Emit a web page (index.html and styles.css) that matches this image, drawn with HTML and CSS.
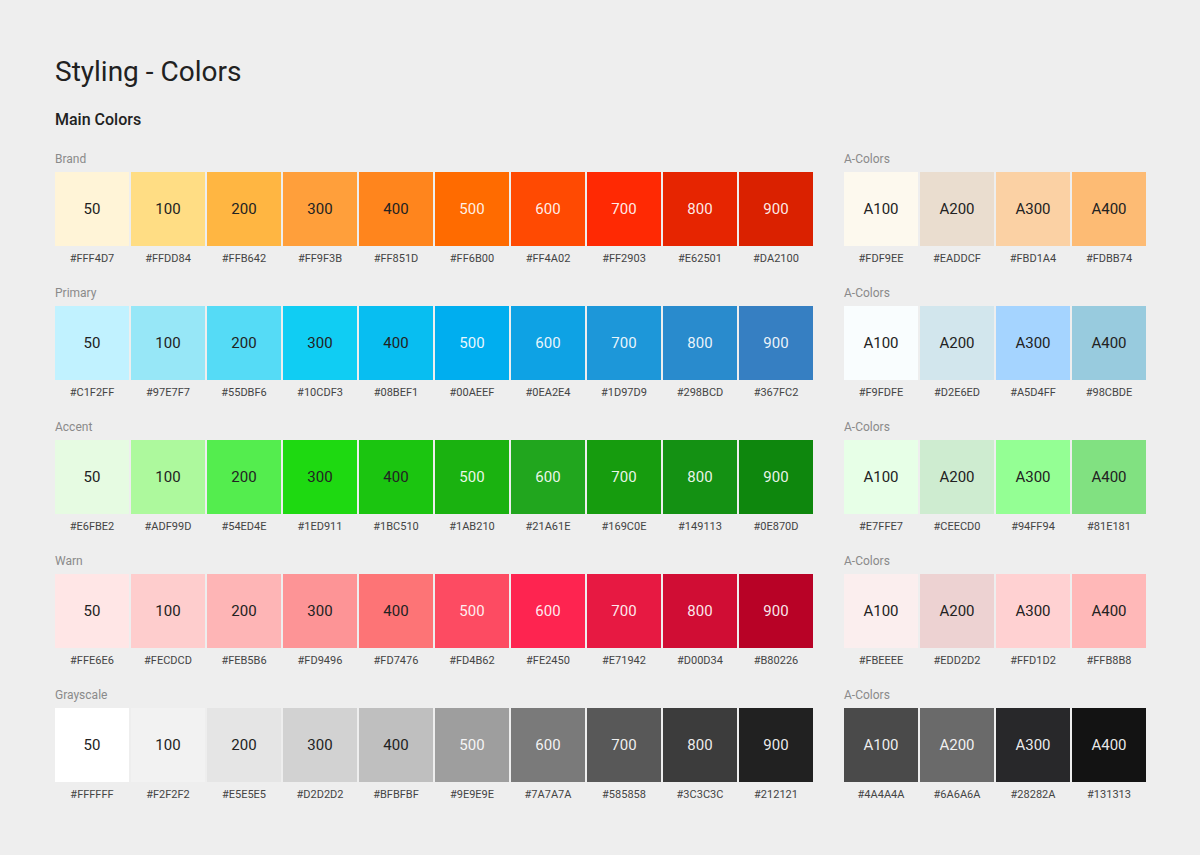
FILE: index.html
```html
<!DOCTYPE html>
<html lang="en">
<head>
<meta charset="utf-8">
<title>Styling - Colors</title>
<link rel="stylesheet" href="styles.css">
</head>
<body>
<main class="page">
  <h1 class="title">Styling - Colors</h1>
  <h2 class="subtitle">Main Colors</h2>

  <section class="row">
    <div class="group">
      <div class="label">Brand</div>
      <div class="swatches s10">
        <div class="sw"><div class="box dk" style="background:#FFF4D7">50</div><div class="hex">#FFF4D7</div></div>
        <div class="sw"><div class="box dk" style="background:#FFDD84">100</div><div class="hex">#FFDD84</div></div>
        <div class="sw"><div class="box dk" style="background:#FFB642">200</div><div class="hex">#FFB642</div></div>
        <div class="sw"><div class="box dk" style="background:#FF9F3B">300</div><div class="hex">#FF9F3B</div></div>
        <div class="sw"><div class="box dk" style="background:#FF851D">400</div><div class="hex">#FF851D</div></div>
        <div class="sw"><div class="box lt" style="background:#FF6B00">500</div><div class="hex">#FF6B00</div></div>
        <div class="sw"><div class="box lt" style="background:#FF4A02">600</div><div class="hex">#FF4A02</div></div>
        <div class="sw"><div class="box lt" style="background:#FF2903">700</div><div class="hex">#FF2903</div></div>
        <div class="sw"><div class="box lt" style="background:#E62501">800</div><div class="hex">#E62501</div></div>
        <div class="sw"><div class="box lt" style="background:#DA2100">900</div><div class="hex">#DA2100</div></div>
      </div>
    </div>
    <div class="group">
      <div class="label">A-Colors</div>
      <div class="swatches s4">
        <div class="sw"><div class="box dk" style="background:#FDF9EE">A100</div><div class="hex">#FDF9EE</div></div>
        <div class="sw"><div class="box dk" style="background:#EADDCF">A200</div><div class="hex">#EADDCF</div></div>
        <div class="sw"><div class="box dk" style="background:#FBD1A4">A300</div><div class="hex">#FBD1A4</div></div>
        <div class="sw"><div class="box dk" style="background:#FDBB74">A400</div><div class="hex">#FDBB74</div></div>
      </div>
    </div>
  </section>

  <section class="row">
    <div class="group">
      <div class="label">Primary</div>
      <div class="swatches s10">
        <div class="sw"><div class="box dk" style="background:#C1F2FF">50</div><div class="hex">#C1F2FF</div></div>
        <div class="sw"><div class="box dk" style="background:#97E7F7">100</div><div class="hex">#97E7F7</div></div>
        <div class="sw"><div class="box dk" style="background:#55DBF6">200</div><div class="hex">#55DBF6</div></div>
        <div class="sw"><div class="box dk" style="background:#10CDF3">300</div><div class="hex">#10CDF3</div></div>
        <div class="sw"><div class="box dk" style="background:#08BEF1">400</div><div class="hex">#08BEF1</div></div>
        <div class="sw"><div class="box lt" style="background:#00AEEF">500</div><div class="hex">#00AEEF</div></div>
        <div class="sw"><div class="box lt" style="background:#0EA2E4">600</div><div class="hex">#0EA2E4</div></div>
        <div class="sw"><div class="box lt" style="background:#1D97D9">700</div><div class="hex">#1D97D9</div></div>
        <div class="sw"><div class="box lt" style="background:#298BCD">800</div><div class="hex">#298BCD</div></div>
        <div class="sw"><div class="box lt" style="background:#367FC2">900</div><div class="hex">#367FC2</div></div>
      </div>
    </div>
    <div class="group">
      <div class="label">A-Colors</div>
      <div class="swatches s4">
        <div class="sw"><div class="box dk" style="background:#F9FDFE">A100</div><div class="hex">#F9FDFE</div></div>
        <div class="sw"><div class="box dk" style="background:#D2E6ED">A200</div><div class="hex">#D2E6ED</div></div>
        <div class="sw"><div class="box dk" style="background:#A5D4FF">A300</div><div class="hex">#A5D4FF</div></div>
        <div class="sw"><div class="box dk" style="background:#98CBDE">A400</div><div class="hex">#98CBDE</div></div>
      </div>
    </div>
  </section>

  <section class="row">
    <div class="group">
      <div class="label">Accent</div>
      <div class="swatches s10">
        <div class="sw"><div class="box dk" style="background:#E6FBE2">50</div><div class="hex">#E6FBE2</div></div>
        <div class="sw"><div class="box dk" style="background:#ADF99D">100</div><div class="hex">#ADF99D</div></div>
        <div class="sw"><div class="box dk" style="background:#54ED4E">200</div><div class="hex">#54ED4E</div></div>
        <div class="sw"><div class="box dk" style="background:#1ED911">300</div><div class="hex">#1ED911</div></div>
        <div class="sw"><div class="box dk" style="background:#1BC510">400</div><div class="hex">#1BC510</div></div>
        <div class="sw"><div class="box lt" style="background:#1AB210">500</div><div class="hex">#1AB210</div></div>
        <div class="sw"><div class="box lt" style="background:#21A61E">600</div><div class="hex">#21A61E</div></div>
        <div class="sw"><div class="box lt" style="background:#169C0E">700</div><div class="hex">#169C0E</div></div>
        <div class="sw"><div class="box lt" style="background:#149113">800</div><div class="hex">#149113</div></div>
        <div class="sw"><div class="box lt" style="background:#0E870D">900</div><div class="hex">#0E870D</div></div>
      </div>
    </div>
    <div class="group">
      <div class="label">A-Colors</div>
      <div class="swatches s4">
        <div class="sw"><div class="box dk" style="background:#E7FFE7">A100</div><div class="hex">#E7FFE7</div></div>
        <div class="sw"><div class="box dk" style="background:#CEECD0">A200</div><div class="hex">#CEECD0</div></div>
        <div class="sw"><div class="box dk" style="background:#94FF94">A300</div><div class="hex">#94FF94</div></div>
        <div class="sw"><div class="box dk" style="background:#81E181">A400</div><div class="hex">#81E181</div></div>
      </div>
    </div>
  </section>

  <section class="row">
    <div class="group">
      <div class="label">Warn</div>
      <div class="swatches s10">
        <div class="sw"><div class="box dk" style="background:#FFE6E6">50</div><div class="hex">#FFE6E6</div></div>
        <div class="sw"><div class="box dk" style="background:#FECDCD">100</div><div class="hex">#FECDCD</div></div>
        <div class="sw"><div class="box dk" style="background:#FEB5B6">200</div><div class="hex">#FEB5B6</div></div>
        <div class="sw"><div class="box dk" style="background:#FD9496">300</div><div class="hex">#FD9496</div></div>
        <div class="sw"><div class="box dk" style="background:#FD7476">400</div><div class="hex">#FD7476</div></div>
        <div class="sw"><div class="box lt" style="background:#FD4B62">500</div><div class="hex">#FD4B62</div></div>
        <div class="sw"><div class="box lt" style="background:#FE2450">600</div><div class="hex">#FE2450</div></div>
        <div class="sw"><div class="box lt" style="background:#E71942">700</div><div class="hex">#E71942</div></div>
        <div class="sw"><div class="box lt" style="background:#D00D34">800</div><div class="hex">#D00D34</div></div>
        <div class="sw"><div class="box lt" style="background:#B80226">900</div><div class="hex">#B80226</div></div>
      </div>
    </div>
    <div class="group">
      <div class="label">A-Colors</div>
      <div class="swatches s4">
        <div class="sw"><div class="box dk" style="background:#FBEEEE">A100</div><div class="hex">#FBEEEE</div></div>
        <div class="sw"><div class="box dk" style="background:#EDD2D2">A200</div><div class="hex">#EDD2D2</div></div>
        <div class="sw"><div class="box dk" style="background:#FFD1D2">A300</div><div class="hex">#FFD1D2</div></div>
        <div class="sw"><div class="box dk" style="background:#FFB8B8">A400</div><div class="hex">#FFB8B8</div></div>
      </div>
    </div>
  </section>

  <section class="row">
    <div class="group">
      <div class="label">Grayscale</div>
      <div class="swatches s10">
        <div class="sw"><div class="box dk" style="background:#FFFFFF">50</div><div class="hex">#FFFFFF</div></div>
        <div class="sw"><div class="box dk" style="background:#F2F2F2">100</div><div class="hex">#F2F2F2</div></div>
        <div class="sw"><div class="box dk" style="background:#E5E5E5">200</div><div class="hex">#E5E5E5</div></div>
        <div class="sw"><div class="box dk" style="background:#D2D2D2">300</div><div class="hex">#D2D2D2</div></div>
        <div class="sw"><div class="box dk" style="background:#BFBFBF">400</div><div class="hex">#BFBFBF</div></div>
        <div class="sw"><div class="box lt" style="background:#9E9E9E">500</div><div class="hex">#9E9E9E</div></div>
        <div class="sw"><div class="box lt" style="background:#7A7A7A">600</div><div class="hex">#7A7A7A</div></div>
        <div class="sw"><div class="box lt" style="background:#585858">700</div><div class="hex">#585858</div></div>
        <div class="sw"><div class="box lt" style="background:#3C3C3C">800</div><div class="hex">#3C3C3C</div></div>
        <div class="sw"><div class="box lt" style="background:#212121">900</div><div class="hex">#212121</div></div>
      </div>
    </div>
    <div class="group">
      <div class="label">A-Colors</div>
      <div class="swatches s4">
        <div class="sw"><div class="box lt" style="background:#4A4A4A">A100</div><div class="hex">#4A4A4A</div></div>
        <div class="sw"><div class="box lt" style="background:#6A6A6A">A200</div><div class="hex">#6A6A6A</div></div>
        <div class="sw"><div class="box lt" style="background:#28282A">A300</div><div class="hex">#28282A</div></div>
        <div class="sw"><div class="box lt" style="background:#131313">A400</div><div class="hex">#131313</div></div>
      </div>
    </div>
  </section>
</main>
</body>
</html>
```

FILE: styles.css
```css
* { box-sizing: border-box; }

html, body {
  margin: 0;
  padding: 0;
  background: #EEEEEE;
}

body {
  font-family: Roboto, "Noto Sans", "Liberation Sans", sans-serif;
  color: #212121;
}

.page {
  padding: 55px 55px 0;
}

.title {
  margin: 0;
  font-size: 28px;
  line-height: 34px;
  font-weight: 400;
  color: #212121;
}

.subtitle {
  margin: 21px 0 0;
  font-size: 16px;
  line-height: 20px;
  font-weight: 500;
  color: #212121;
}

.row {
  display: flex;
  gap: 31px;
  margin-top: 21px;
}

.row + .row {
  margin-top: 19px;
}

.group {
  display: flex;
  flex-direction: column;
}

.label {
  font-size: 12px;
  line-height: 16px;
  color: #8a8a8a;
  margin-bottom: 5px;
}

.swatches {
  display: flex;
  gap: 2px;
}

.sw {
  width: 74px;
  display: flex;
  flex-direction: column;
  align-items: center;
}

.box {
  width: 74px;
  height: 74px;
  display: flex;
  align-items: center;
  justify-content: center;
  font-size: 15px;
  line-height: 1;
}

.box.dk { color: #222222; }
.box.lt { color: rgba(255, 255, 255, 0.92); }

.hex {
  margin-top: 6px;
  font-size: 11px;
  line-height: 14px;
  color: #444444;
}
```
